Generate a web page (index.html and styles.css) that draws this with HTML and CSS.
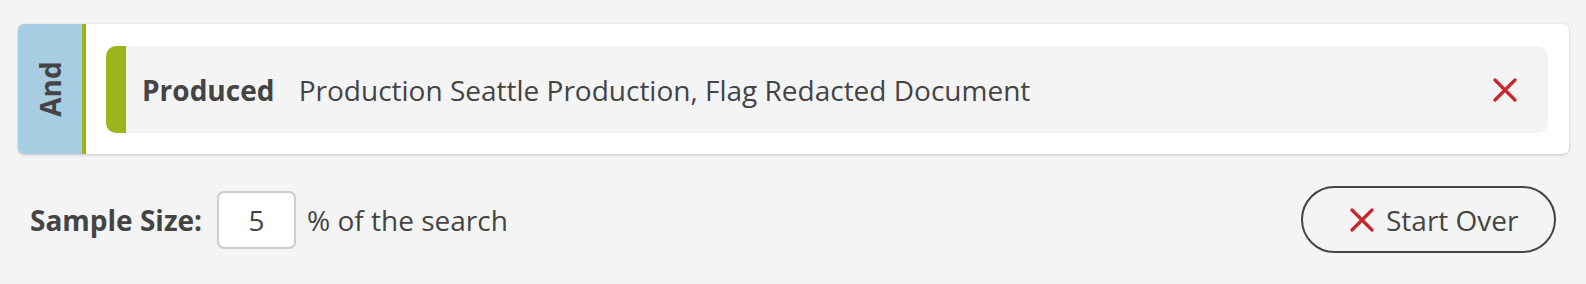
FILE: index.html
```html
<!DOCTYPE html>
<html>
<head>
<meta charset="utf-8">
<link rel="stylesheet" href="styles.css">
</head>
<body>
<div class="page">
  <div class="card">
    <div class="op"><span class="op-label">And</span></div>
    <div class="card-body">
      <div class="pill">
        <div class="pill-bar"></div>
        <div class="pill-content">
          <span class="pill-key">Produced</span>
          <span class="pill-value">Production Seattle Production, Flag Redacted Document</span>
        </div>
        <button class="pill-remove" aria-label="Remove">
          <svg width="24" height="24" viewBox="0 0 24 24"><path d="M2 2 L22 22 M22 2 L2 22" stroke="#c9252c" stroke-width="3.2" stroke-linecap="round" fill="none"/></svg>
        </button>
      </div>
    </div>
  </div>
  <div class="footer">
    <div class="sample">
      <label class="sample-label">Sample Size:</label>
      <input class="sample-input" type="text" value="5">
      <span class="sample-suffix">% of the search</span>
    </div>
    <button class="start-over">
      <svg width="24" height="24" viewBox="0 0 24 24"><path d="M2 2 L22 22 M22 2 L2 22" stroke="#c9252c" stroke-width="3.2" stroke-linecap="round" fill="none"/></svg>
      <span>Start Over</span>
    </button>
  </div>
</div>
</body>
</html>
```

FILE: styles.css
```css
html, body {
  margin: 0;
  padding: 0;
  background: #f4f4f4;
}
body {
  font-family: "Open Sans", "Liberation Sans", sans-serif;
  color: #444;
}
.page {
  padding: 24px 17px 0 18px;
}
.card {
  display: flex;
  height: 130px;
  background: #fff;
  border-radius: 6px;
  box-shadow: 0 1px 3px rgba(0,0,0,0.18), 0 0 1px rgba(0,0,0,0.12);
  overflow: hidden;
}
.op {
  width: 64px;
  flex: none;
  background: #a6cde2;
  border-right: 4px solid #9cb61a;
  display: flex;
  align-items: center;
  justify-content: center;
}
.op-label {
  transform: rotate(-90deg);
  font-weight: 700;
  font-size: 28px;
  color: #444;
  white-space: nowrap;
}
.card-body {
  flex: 1;
  padding: 22px 21px 21px 20px;
  display: flex;
}
.pill {
  flex: 1;
  display: flex;
  align-items: center;
  background: #f4f4f4;
  border-radius: 10px;
  overflow: hidden;
}
.pill-bar {
  width: 20px;
  align-self: stretch;
  background: #9cb61a;
  flex: none;
}
.pill-content {
  flex: 1;
  padding-left: 16px;
  font-size: 28px;
  white-space: nowrap;
}
.pill-key {
  font-weight: 700;
  margin-right: 17px;
}
.pill-remove {
  background: none;
  border: 0;
  padding: 0;
  margin-right: 31px;
  width: 24px;
  height: 24px;
  display: flex;
}
.footer {
  display: flex;
  align-items: center;
  justify-content: space-between;
  margin-top: 32px;
  padding-left: 12px;
  padding-right: 13px;
}
.sample {
  display: flex;
  align-items: center;
  font-size: 28px;
}
.sample-label {
  font-weight: 700;
  margin-right: 15px;
}
.sample-input {
  box-sizing: border-box;
  width: 79px;
  height: 58px;
  border: 2px solid #cccccc;
  border-radius: 7px;
  background: #fff;
  text-align: center;
  font-family: inherit;
  font-size: 28px;
  color: #444;
  padding: 0;
  margin-right: 11px;
}
.sample-suffix {
  white-space: nowrap;
}
.start-over {
  box-sizing: border-box;
  width: 255px;
  height: 67px;
  border: 2px solid #444;
  border-radius: 34px;
  background: transparent;
  display: flex;
  align-items: center;
  padding: 0 0 0 47px;
  font-family: inherit;
  font-size: 28px;
  color: #444;
}
.start-over span {
  margin-left: 12px;
}
```
